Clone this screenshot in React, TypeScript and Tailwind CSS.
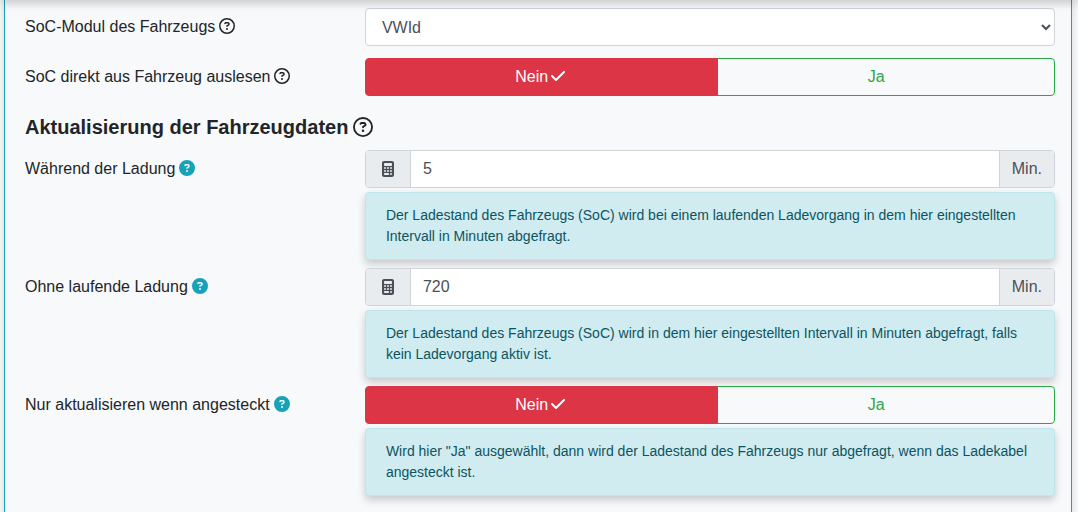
import { useId, useState, type ReactNode } from "react";
import { FaCalculator, FaCheck, FaCircleQuestion, FaRegCircleQuestion } from "react-icons/fa6";

const GRID = "grid grid-cols-[33fr_67fr]";

function Hint({ text }: { text: string }) {
  return (
    <p className="mt-1 rounded border border-[#bee5eb] bg-[#d1ecf1] px-5 py-3 text-sm leading-[21px] text-[#0c5460] shadow-[0_4px_8px_rgba(0,0,0,0.2)]">
      {text}
    </p>
  );
}

function LabelText({ text, filled }: { text: string; filled?: boolean }) {
  return (
    <>
      {text}
      {filled ? (
        <FaCircleQuestion className="mb-0.5 size-4 text-[#17a2b8]" />
      ) : (
        <FaRegCircleQuestion className="mb-0.5 size-4" />
      )}
    </>
  );
}

function NumberField({ label, initial, hint }: { label: string; initial: string; hint: string }) {
  const id = useId();
  const [value, setValue] = useState(initial);
  return (
    <div className={GRID}>
      <label htmlFor={id} className="flex items-center gap-1 self-start py-[7px]">
        <LabelText text={label} filled />
      </label>
      <div>
        <div className="relative flex h-[38px] rounded border border-[#ced4da] bg-white text-[#495057]">
          <span className="flex items-center rounded-l-[3px] border-r border-[#ced4da] bg-[#e9ecef] px-4">
            <FaCalculator className="h-4 w-3" />
          </span>
          <input
            id={id}
            inputMode="numeric"
            value={value}
            onChange={(e) => setValue(e.target.value)}
            className="min-w-0 flex-1 px-3 outline-none"
          />
          <span className="flex items-center rounded-r-[3px] border-l border-[#ced4da] bg-[#e9ecef] px-3">Min.</span>
        </div>
        <Hint text={hint} />
      </div>
    </div>
  );
}

function Mark({ shown }: { shown: boolean }) {
  return (
    <span className={shown ? "mb-0.5 flex w-5 justify-center" : "invisible mb-0.5 flex w-5 justify-center"}>
      <FaCheck className="h-4 w-[14px]" />
    </span>
  );
}

function ChoiceField({ label, filled, children }: { label: string; filled?: boolean; children?: ReactNode }) {
  const id = useId();
  const [yes, setYes] = useState(false);
  return (
    <div className={GRID}>
      <span id={id} className="flex items-center gap-1 self-start py-[7px]">
        <LabelText text={label} filled={filled} />
      </span>
      <div>
        <div role="group" aria-labelledby={id} className="flex h-[38px]">
          <button
            type="button"
            aria-pressed={!yes}
            onClick={() => setYes(false)}
            className={`flex flex-auto items-center justify-center rounded-l border border-[#dc3545] px-3 ${yes ? "text-[#dc3545]" : "z-1 bg-[#dc3545] text-white"}`}
          >
            Nein
            <Mark shown={!yes} />
          </button>
          <button
            type="button"
            aria-pressed={yes}
            onClick={() => setYes(true)}
            className={`-ml-px flex flex-auto items-center justify-center rounded-r border border-[#28a745] px-3 ${yes ? "z-1 bg-[#28a745] text-white" : "text-[#28a745]"}`}
          >
            Ja
            <Mark shown={yes} />
          </button>
        </div>
        {children}
      </div>
    </div>
  );
}

export default function App() {
  return (
    <div className="min-h-screen overflow-x-hidden bg-[#f8f9fa] pr-1.5 pl-1 font-['Liberation_Sans',Arial,sans-serif] text-base leading-6 text-[#212529]">
      <div aria-hidden="true" className="fixed inset-x-0 -top-14 z-10 h-14 shadow-[0_4px_8px_rgba(0,0,0,0.18)]" />
      <main className="min-h-screen border-x border-[#17a2b8] bg-[#f8f9fa] pt-2 pr-4 pb-4 pl-5 shadow-[0_4px_8px_rgba(0,0,0,0.15)]">
        <form className="flex flex-col" onSubmit={(e) => e.preventDefault()}>
          <div className={`${GRID} mb-3`}>
            <label htmlFor="soc-module" className="flex items-center gap-1 self-start py-[7px]">
              <LabelText text="SoC-Modul des Fahrzeugs" />
            </label>
            <select
              id="soc-module"
              className="h-[38px] w-full rounded border border-[#ced4da] bg-white px-3 text-[#495057]"
            >
              <option>VWId</option>
            </select>
          </div>
          <ChoiceField label="SoC direkt aus Fahrzeug auslesen" />
          <h2 className="mt-[19px] mb-[11px] flex items-center gap-[5px] text-xl leading-6 font-bold">
            Aktualisierung der Fahrzeugdaten
            <FaRegCircleQuestion className="size-5" />
          </h2>
          <div className="flex flex-col gap-2">
            <NumberField
              label="Während der Ladung"
              initial="5"
              hint="Der Ladestand des Fahrzeugs (SoC) wird bei einem laufenden Ladevorgang in dem hier eingestellten Intervall in Minuten abgefragt."
            />
            <NumberField
              label="Ohne laufende Ladung"
              initial="720"
              hint="Der Ladestand des Fahrzeugs (SoC) wird in dem hier eingestellten Intervall in Minuten abgefragt, falls kein Ladevorgang aktiv ist."
            />
            <ChoiceField label="Nur aktualisieren wenn angesteckt" filled>
              <Hint text={'Wird hier "Ja" ausgewählt, dann wird der Ladestand des Fahrzeugs nur abgefragt, wenn das Ladekabel angesteckt ist.'} />
            </ChoiceField>
          </div>
        </form>
      </main>
    </div>
  );
}
